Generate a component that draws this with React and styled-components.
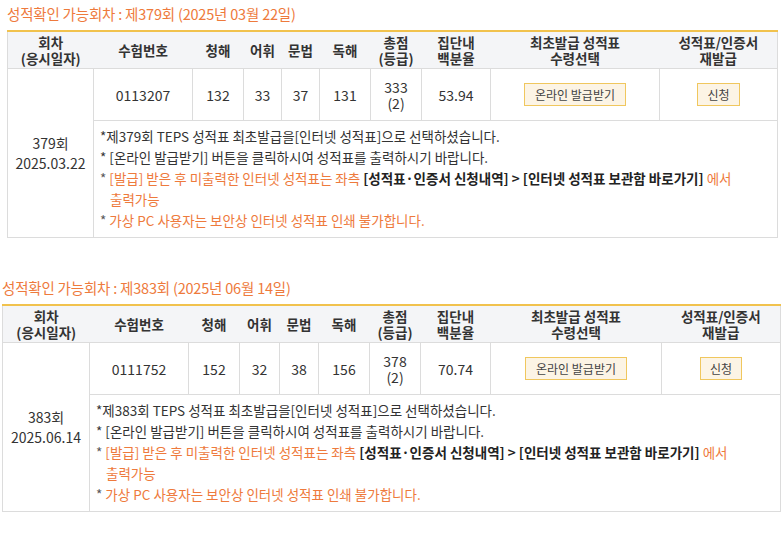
import React from 'react';
import styled, { createGlobalStyle } from 'styled-components';

const Global = createGlobalStyle`
  html, body { margin: 0; padding: 0; background: #fff; }
  body {
    font-family: "Noto Sans CJK KR", "Noto Sans", sans-serif;
    color: #333;
    word-break: keep-all;
  }
`;

const Page = styled.div`
  display: flex;
  flex-direction: column;
  gap: 40px;
  padding-top: 4px;
`;

const Section = styled.section`
  margin-left: ${(p) => p.$left}px;
  width: ${(p) => p.$width}px;
  display: flex;
  flex-direction: column;
  gap: 6px;
`;

const Title = styled.h2`
  margin: 0;
  font-size: 14.5px;
  font-weight: 400;
  line-height: 20px;
  color: #ee7a3c;
  letter-spacing: -0.2px;
`;

const Table = styled.table`
  width: 100%;
  table-layout: fixed;
  border-collapse: collapse;
  border-top: 2px solid #f1c24d;
  border-left: 1px solid #dcdcdc;
  border-right: 1px solid #dcdcdc;
  border-bottom: 1px solid #dcdcdc;
`;

const Th = styled.th`
  height: 36px;
  padding: 0;
  background: #f4f5f7;
  border-bottom: 1px solid #dcdcdc;
  font-size: 13.5px;
  font-weight: 700;
  line-height: 16px;
  color: #333;
  text-align: center;
  vertical-align: middle;
`;

const Td = styled.td`
  height: 51px;
  padding: 0;
  border: 1px solid #dcdcdc;
  font-size: 14px;
  line-height: 16px;
  color: #333;
  text-align: center;
  vertical-align: middle;
`;

const RoundCell = styled(Td)`
  line-height: 20px;
`;

const NoticeCell = styled.td`
  padding: 5px 6px 6px 16px;
  height: 104px;
  border: 1px solid #dcdcdc;
  text-align: left;
  vertical-align: top;
  font-size: 13.5px;
  line-height: 21px;
  color: #333;
  word-break: keep-all;
`;

const Line = styled.p`
  margin: 0;
  text-indent: -10px;
  color: ${(p) => (p.$accent ? '#ee7a3c' : '#333')};
`;

const Star = styled.span`
  color: #555;
`;

const Strong = styled.b`
  color: #222;
  font-weight: 700;
`;

const Btn = styled.button`
  font-family: inherit;
  font-size: 12px;
  color: #444;
  background: #fcf4e5;
  border: 1px solid #f0c75e;
  height: 23px;
  padding: 0 ${(p) => (p.$wide ? 10 : 9)}px;
  line-height: 20px;
  border-radius: 0;
  cursor: pointer;
`;

const sections = [
  {
    title: '성적확인 가능회차 : 제379회 (2025년 03월 22일)',
    left: 7,
    widths: [86, 99, 51, 38, 38, 51, 51, 69, 169, 118],
    round: '379',
    date: '2025.03.22',
    id: '0113207',
    scores: ['132', '33', '37', '131'],
    total: '333',
    grade: '(2)',
    pct: '53.94',
  },
  {
    title: '성적확인 가능회차 : 제383회 (2025년 06월 14일)',
    left: 2,
    widths: [87, 99, 51, 40, 39, 51, 51, 70, 171, 119],
    round: '383',
    date: '2025.06.14',
    id: '0111752',
    scores: ['152', '32', '38', '156'],
    total: '378',
    grade: '(2)',
    pct: '70.74',
  },
];

const headers = [
  ['회차', '(응시일자)'],
  ['수험번호'],
  ['청해'],
  ['어휘'],
  ['문법'],
  ['독해'],
  ['총점', '(등급)'],
  ['집단내', '백분율'],
  ['최초발급 성적표', '수령선택'],
  ['성적표/인증서', '재발급'],
];

function ScoreTable({ s }) {
  const total = s.widths.reduce((a, b) => a + b, 0);
  return (
    <Section $left={s.left} $width={total}>
      <Title>{s.title}</Title>
      <Table>
        <colgroup>
          {s.widths.map((w, i) => (
            <col key={i} width={w} />
          ))}
        </colgroup>
        <thead>
          <tr>
            {headers.map((h, i) => (
              <Th key={i}>
                {h.map((t, j) => (
                  <React.Fragment key={j}>
                    {j > 0 && <br />}
                    {t}
                  </React.Fragment>
                ))}
              </Th>
            ))}
          </tr>
        </thead>
        <tbody>
          <tr>
            <RoundCell rowSpan={2}>
              {s.round}회
              <br />
              {s.date}
            </RoundCell>
            <Td>{s.id}</Td>
            {s.scores.map((v, i) => (
              <Td key={i}>{v}</Td>
            ))}
            <Td>
              {s.total}
              <br />
              {s.grade}
            </Td>
            <Td>{s.pct}</Td>
            <Td>
              <Btn $wide>온라인 발급받기</Btn>
            </Td>
            <Td>
              <Btn>신청</Btn>
            </Td>
          </tr>
          <tr>
            <NoticeCell colSpan={9}>
              <Line>*제{s.round}회 TEPS 성적표 최초발급을[인터넷 성적표]으로 선택하셨습니다.</Line>
              <Line>* [온라인 발급받기] 버튼을 클릭하시여 성적표를 출력하시기 바랍니다.</Line>
              <Line $accent>
                <Star>* </Star>[발급] 받은 후 미출력한 인터넷 성적표는 좌측{' '}
                <Strong>[성적표·인증서 신청내역] &gt; [인터넷 성적표 보관함 바로가기]</Strong> 에서 출력가능
              </Line>
              <Line $accent>
                <Star>* </Star>가상 PC 사용자는 보안상 인터넷 성적표 인쇄 불가합니다.
              </Line>
            </NoticeCell>
          </tr>
        </tbody>
      </Table>
    </Section>
  );
}

export default function App() {
  return (
    <>
      <Global />
      <Page>
        {sections.map((s) => (
          <ScoreTable key={s.round} s={s} />
        ))}
      </Page>
    </>
  );
}
